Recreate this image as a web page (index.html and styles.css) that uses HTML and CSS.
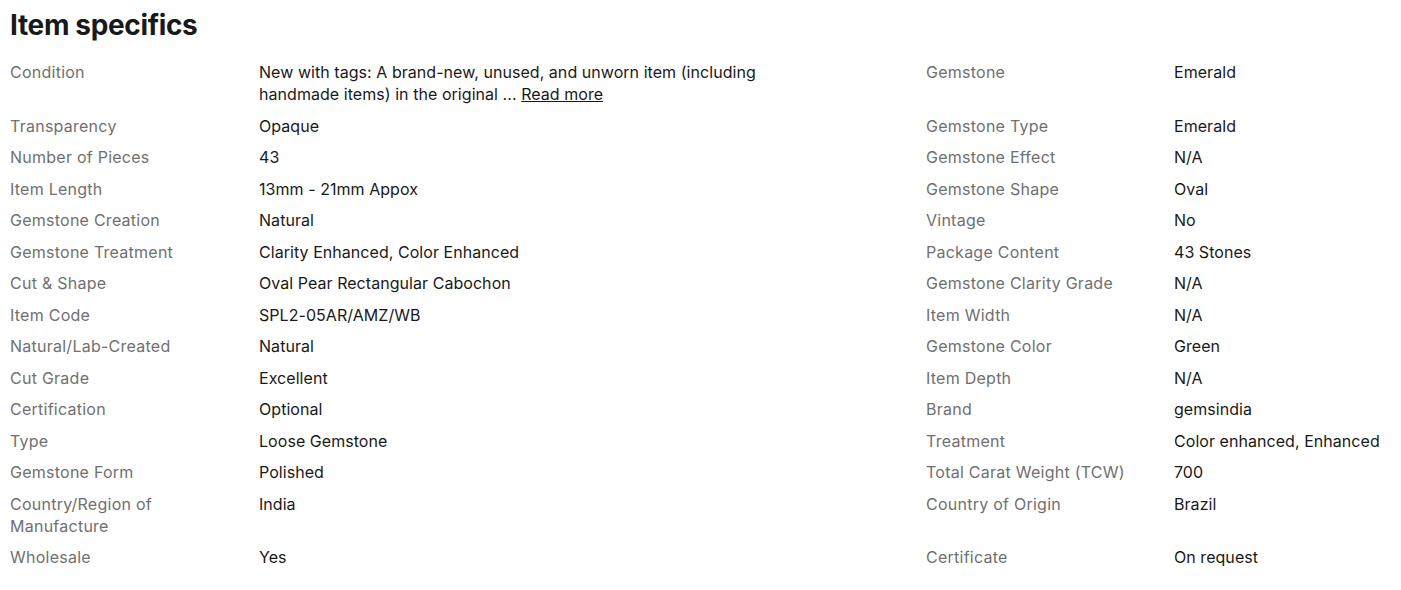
FILE: index.html
```html
<!DOCTYPE html>
<html lang="en">
<head>
  <meta charset="UTF-8">
  <title>Item specifics</title>
  <link rel="stylesheet" href="styles.css">
</head>
<body>

  <section class="specifics">
    <h2>Item specifics</h2>

    <div class="rows">
      <div class="row">
        <div class="label">Condition</div>
        <div class="value value-wide">New with tags: A brand-new, unused, and unworn item (including handmade items) in the original ... <a href="#">Read more</a></div>
        <div class="label">Gemstone</div>
        <div class="value">Emerald</div>
      </div>
      <div class="row">
        <div class="label">Transparency</div>
        <div class="value">Opaque</div>
        <div class="label">Gemstone Type</div>
        <div class="value">Emerald</div>
      </div>
      <div class="row">
        <div class="label">Number of Pieces</div>
        <div class="value">43</div>
        <div class="label">Gemstone Effect</div>
        <div class="value">N/A</div>
      </div>
      <div class="row">
        <div class="label">Item Length</div>
        <div class="value">13mm - 21mm Appox</div>
        <div class="label">Gemstone Shape</div>
        <div class="value">Oval</div>
      </div>
      <div class="row">
        <div class="label">Gemstone Creation</div>
        <div class="value">Natural</div>
        <div class="label">Vintage</div>
        <div class="value">No</div>
      </div>
      <div class="row">
        <div class="label">Gemstone Treatment</div>
        <div class="value">Clarity Enhanced, Color Enhanced</div>
        <div class="label">Package Content</div>
        <div class="value">43 Stones</div>
      </div>
      <div class="row">
        <div class="label">Cut &amp; Shape</div>
        <div class="value">Oval Pear Rectangular Cabochon</div>
        <div class="label">Gemstone Clarity Grade</div>
        <div class="value">N/A</div>
      </div>
      <div class="row">
        <div class="label">Item Code</div>
        <div class="value">SPL2-05AR/AMZ/WB</div>
        <div class="label">Item Width</div>
        <div class="value">N/A</div>
      </div>
      <div class="row">
        <div class="label">Natural/Lab-Created</div>
        <div class="value">Natural</div>
        <div class="label">Gemstone Color</div>
        <div class="value">Green</div>
      </div>
      <div class="row">
        <div class="label">Cut Grade</div>
        <div class="value">Excellent</div>
        <div class="label">Item Depth</div>
        <div class="value">N/A</div>
      </div>
      <div class="row">
        <div class="label">Certification</div>
        <div class="value">Optional</div>
        <div class="label">Brand</div>
        <div class="value">gemsindia</div>
      </div>
      <div class="row">
        <div class="label">Type</div>
        <div class="value">Loose Gemstone</div>
        <div class="label">Treatment</div>
        <div class="value">Color enhanced, Enhanced</div>
      </div>
      <div class="row">
        <div class="label">Gemstone Form</div>
        <div class="value">Polished</div>
        <div class="label">Total Carat Weight (TCW)</div>
        <div class="value">700</div>
      </div>
      <div class="row">
        <div class="label">Country/Region of Manufacture</div>
        <div class="value">India</div>
        <div class="label">Country of Origin</div>
        <div class="value">Brazil</div>
      </div>
      <div class="row">
        <div class="label">Wholesale</div>
        <div class="value">Yes</div>
        <div class="label">Certificate</div>
        <div class="value">On request</div>
      </div>
    </div>
  </section>

</body>
</html>
```

FILE: styles.css
```css
* {
  box-sizing: border-box;
}

body {
  margin: 0;
  padding: 8px 10px 0;
  background: #fff;
  color: #191919;
  font-family: Inter, "Open Sans", Arial, sans-serif;
  font-size: 16px;
}

.specifics h2 {
  margin: 0 0 19px;
  font-size: 28px;
  line-height: 34px;
  font-weight: 700;
  letter-spacing: -0.35px;
}

.rows {
  display: flex;
  flex-direction: column;
  gap: 9.5px;
}

.row {
  display: grid;
  grid-template-columns: 249px 667px 248px 1fr;
  line-height: 22px;
}

.label {
  color: #707070;
  padding-right: 40px;
  letter-spacing: 0.25px;
}

.value {
  letter-spacing: 0.05px;
}

.value-wide {
  max-width: 530px;
}

.value a {
  color: #191919;
  text-decoration: underline;
}
```
